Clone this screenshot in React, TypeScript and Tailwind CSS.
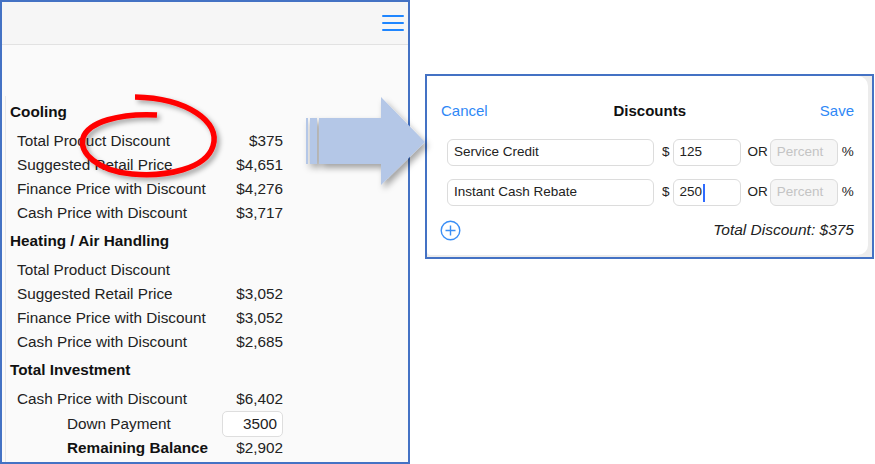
import React from 'react'

const FONT = { fontFamily: '"Liberation Sans", Arial, sans-serif' }

type Row = { label: string; value?: string }

const cooling: Row[] = [
  { label: 'Total Product Discount', value: '$375' },
  { label: 'Suggested Retail Price', value: '$4,651' },
  { label: 'Finance Price with Discount', value: '$4,276' },
  { label: 'Cash Price with Discount', value: '$3,717' },
]

const heating: Row[] = [
  { label: 'Total Product Discount' },
  { label: 'Suggested Retail Price', value: '$3,052' },
  { label: 'Finance Price with Discount', value: '$3,052' },
  { label: 'Cash Price with Discount', value: '$2,685' },
]

function Heading({ children }: { children: React.ReactNode }) {
  return <div className="h-[33px] flex items-center text-[15.3px] font-bold text-[#111]">{children}</div>
}

function Item({ label, value }: Row) {
  return (
    <div className="h-[24px] flex items-center justify-between pl-[7px] text-[15.3px] text-[#222]">
      <span>{label}</span>
      <span>{value}</span>
    </div>
  )
}

function Summary() {
  return (
    <div className="w-[410px] h-[464px] border-2 border-[#4472c4] bg-[#fafafa] flex flex-col">
      {/* Top bar */}
      <div className="h-[43px] shrink-0 bg-[#f6f6f6] border-b border-[#e2e2e2] flex items-center justify-end pr-[4px]">
        <div className="flex flex-col gap-[5px] w-[22px]">
          <span className="h-[2px] bg-[#1f86ff] rounded-full" />
          <span className="h-[2px] bg-[#1f86ff] rounded-full" />
          <span className="h-[2px] bg-[#1f86ff] rounded-full" />
        </div>
      </div>

      <div className="pt-[51px] pl-[3px] flex-1">
        <div className="w-[278px] border-l border-[#e8e8e8] pl-[4px] h-full">
          <Heading>Cooling</Heading>
          {cooling.map((r, i) => <Item key={i} {...r} />)}
          <Heading>Heating / Air Handling</Heading>
          {heating.map((r, i) => <Item key={i} {...r} />)}
          <Heading>Total Investment</Heading>
          <div className="h-[25px] flex items-center justify-between pl-[7px] text-[15.3px] text-[#222]">
            <span>Cash Price with Discount</span>
            <span>$6,402</span>
          </div>
          <div className="h-[24px] flex items-center justify-between pl-[57px] text-[15.3px] text-[#222]">
            <span>Down Payment</span>
            <div className="h-[26px] w-[61px] shrink-0 bg-white border border-[#dedede] rounded-[5px] flex items-center justify-end pr-[5px]">
              3500
            </div>
          </div>
          <div className="h-[24px] flex items-center justify-between pl-[57px] text-[15.3px] text-[#222]">
            <span className="font-bold text-[#111]">Remaining Balance</span>
            <span>$2,902</span>
          </div>
        </div>
      </div>
    </div>
  )
}

function Field({ text, w, placeholder, caret, muted }: { text?: string; w: number; placeholder?: string; caret?: boolean; muted?: boolean }) {
  return (
    <div
      className={`h-[27px] shrink-0 border border-[#dcdcdc] rounded-[6px] flex items-center pl-[6px] text-[13.5px] ${muted ? 'bg-[#f6f6f6]' : 'bg-white'}`}
      style={{ width: w }}
    >
      {text ? <span className="text-[#222]">{text}</span> : <span className="text-[#c4c4c4]">{placeholder}</span>}
      {caret && <span className="w-[2px] h-[18px] bg-[#2f6bff] ml-[1px]" />}
    </div>
  )
}

function DiscountRow({ name, amount, caret }: { name: string; amount: string; caret?: boolean }) {
  return (
    <div className="flex items-center pl-[20px] text-[13.5px] text-[#222]">
      <Field text={name} w={207} />
      <span className="ml-[8px]">$</span>
      <span className="ml-[3px]">
        <Field text={amount} w={68} caret={caret} />
      </span>
      <span className="ml-[7px]">OR</span>
      <span className="ml-[2px]">
        <Field w={68} placeholder="Percent" muted />
      </span>
      <span className="ml-[4px]">%</span>
    </div>
  )
}

function Discounts() {
  return (
    <div className="w-[449px] h-[185px] border-2 border-[#4472c4] bg-[#ececec]">
      <div className="h-[179px] mr-[4px] bg-white rounded-r-[10px] rounded-bl-[4px]">
        <div className="pt-[25px] px-[14px] h-[45px] flex items-center justify-between text-[15px]">
          <span className="text-[#2f88f6]">Cancel</span>
          <span className="font-bold text-[#111] -ml-[8px]">Discounts</span>
          <span className="text-[#2f88f6]">Save</span>
        </div>
        <div className="mt-[18px] flex flex-col gap-[13px]">
          <DiscountRow name="Service Credit" amount="125" />
          <DiscountRow name="Instant Cash Rebate" amount="250" caret />
        </div>
        <div className="mt-[14px] h-[20px] flex items-center justify-between pl-[13px] pr-[14px]">
          <svg width="21" height="21" viewBox="0 0 21 21" fill="none" stroke="#3b8ff6" strokeWidth="1.4">
            <circle cx="10.5" cy="10.5" r="9.3" />
            <path d="M10.5 5.5v10M5.5 10.5h10" />
          </svg>
          <span className="italic text-[15.5px] text-[#222]">Total Discount: $375</span>
        </div>
      </div>
    </div>
  )
}

export default function App() {
  return (
    <div className="relative w-[875px] h-[464px] bg-white flex overflow-hidden" style={FONT}>
      <Summary />
      <div className="pl-[15px] pt-[74px]">
        <Discounts />
      </div>

      {/* Red hand-drawn loop */}
      <svg className="absolute left-0 top-0 pointer-events-none" width="300" height="200" viewBox="0 0 300 200">
        <defs>
          <filter id="redShadow" x="-20%" y="-20%" width="150%" height="150%">
            <feDropShadow dx="3" dy="3" stdDeviation="2.5" floodColor="#000" floodOpacity="0.35" />
          </filter>
        </defs>
        <path
          d="M135 97 C 187 98 221 122 213 146 C 206 169 166 177 132 174 C 98 171 79 153 83 138 C 88 122 120 113 157 115"
          fill="none"
          stroke="#ff0000"
          strokeWidth="5.5"
          strokeLinecap="butt"
          filter="url(#redShadow)"
        />
      </svg>

      {/* Arrow */}
      <svg className="absolute left-[300px] top-[90px] pointer-events-none" width="140" height="110" viewBox="0 0 140 110">
        <defs>
          <filter id="arrowShadow" x="-20%" y="-20%" width="150%" height="150%">
            <feDropShadow dx="3" dy="4" stdDeviation="3" floodColor="#000" floodOpacity="0.35" />
          </filter>
        </defs>
        <g fill="#b4c7e7" filter="url(#arrowShadow)">
          <rect x="6" y="28" width="2" height="46" />
          <rect x="10" y="28" width="7" height="46" />
          <polygon points="19,28 81,28 81,7 125,52 81,95 81,74 19,74" />
        </g>
      </svg>
    </div>
  )
}
